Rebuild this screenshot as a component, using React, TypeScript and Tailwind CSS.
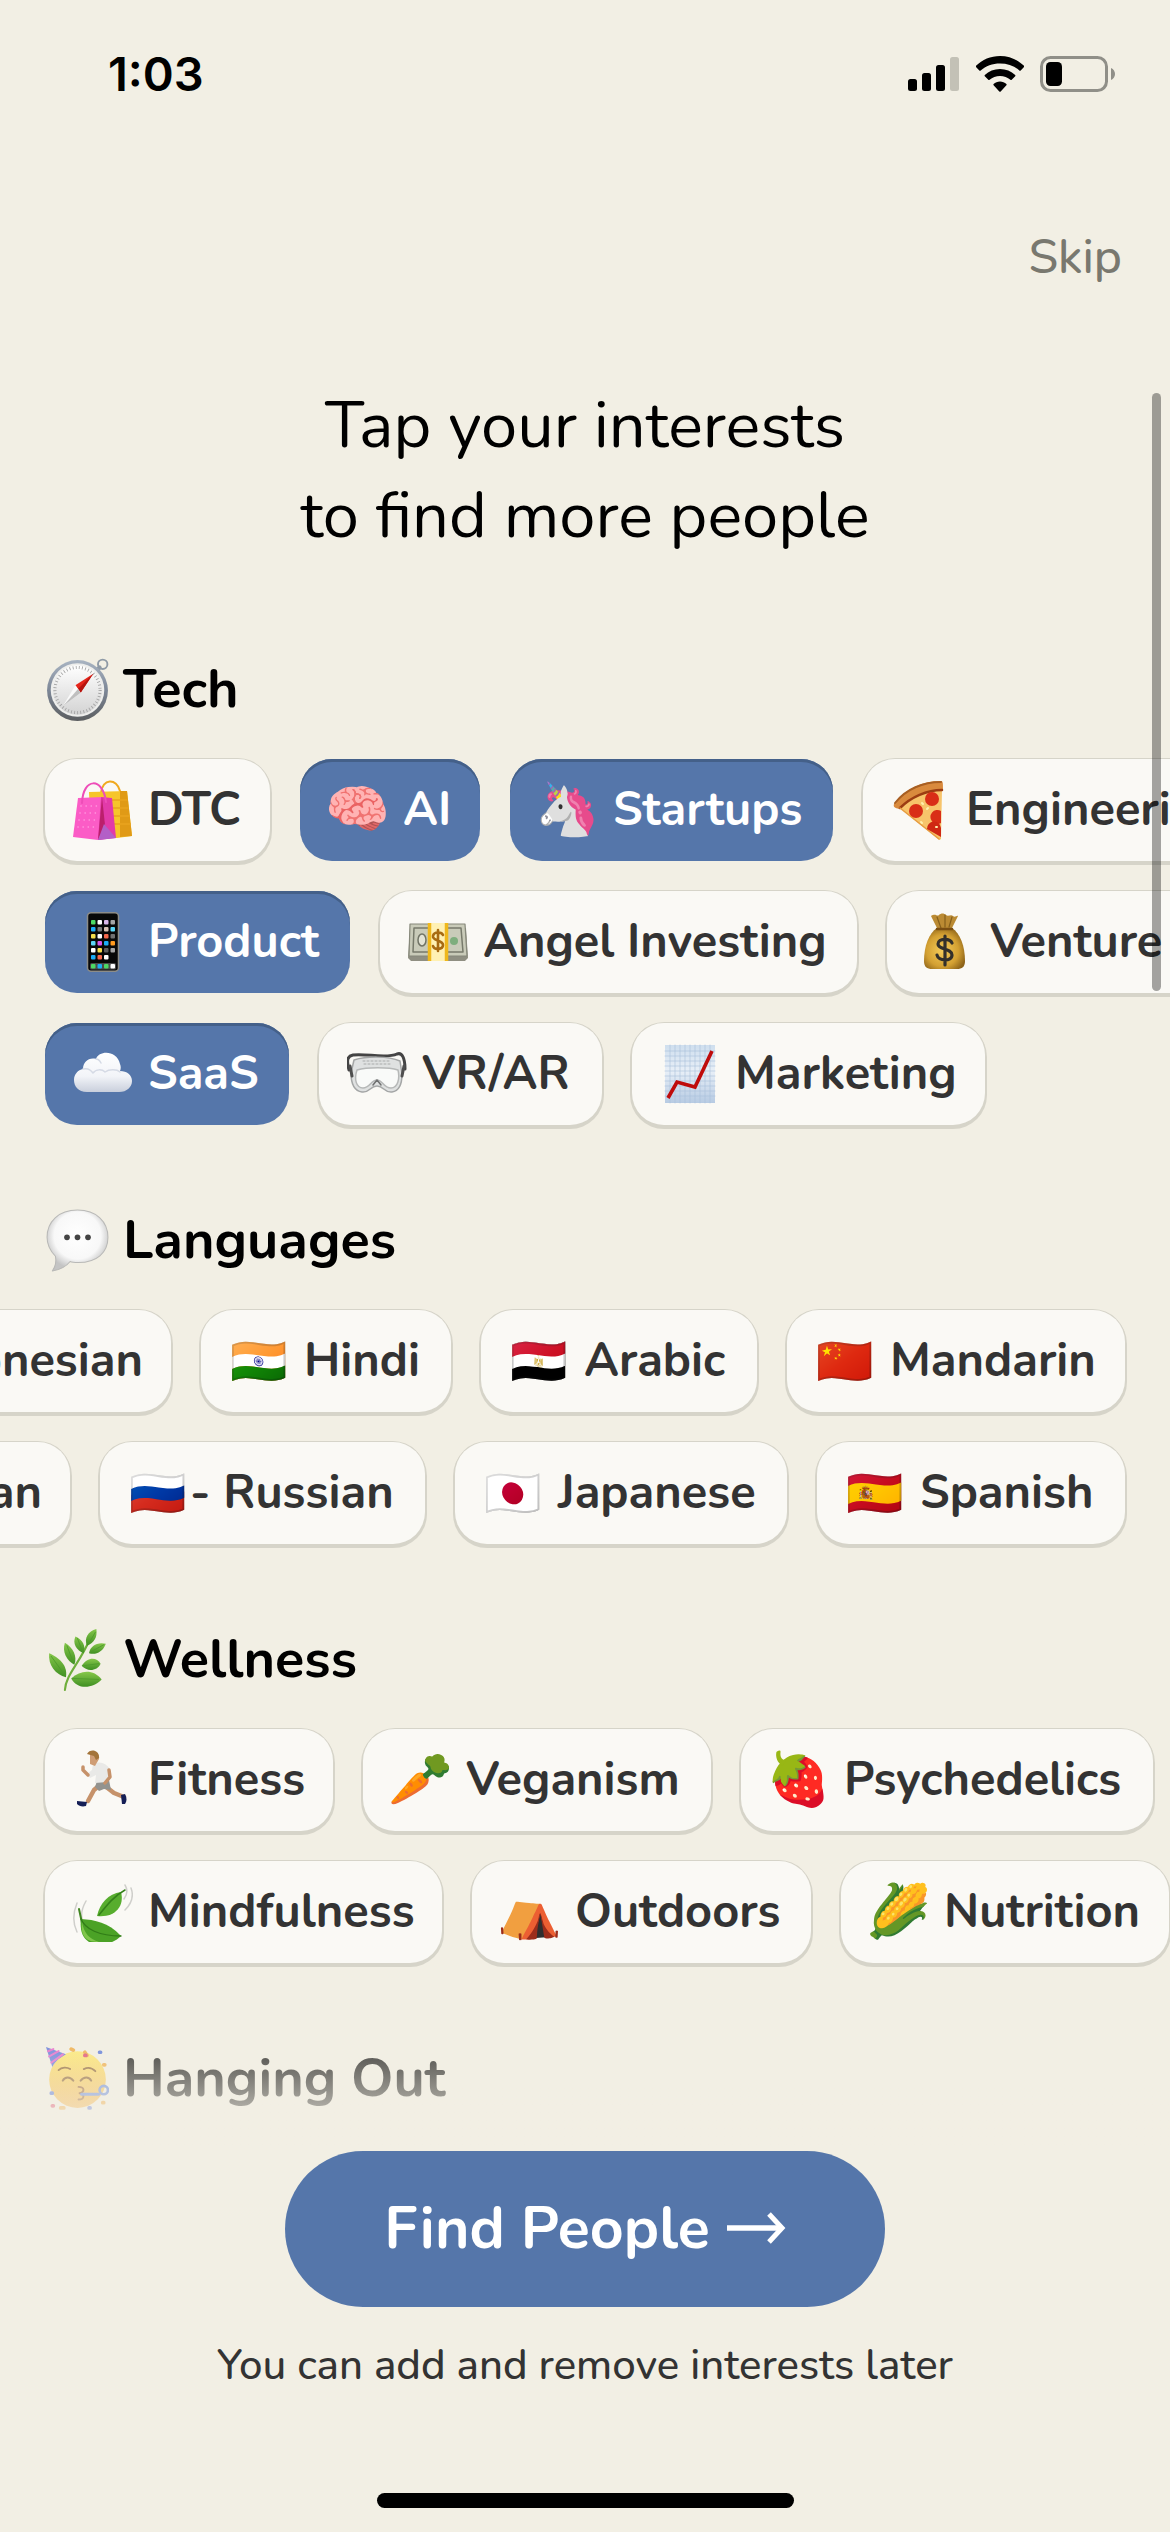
import React, { useState } from "react";
import type { ReactNode } from "react";
import clsx from "clsx";

type Interest = { icon: ReactNode; label: string; width: string; tight?: boolean };
type Category = { icon: ReactNode; name: string; align?: "end"; rows: Interest[][] };

function Art({ children }: { children: ReactNode }) {
  return (
    <svg viewBox="0 0 60 60" className="size-full" fill="none" strokeLinecap="round" strokeLinejoin="round" aria-hidden="true">
      {children}
    </svg>
  );
}

function Glyph({ children }: { children: string }) {
  return <span className="font-['Noto_Color_Emoji'] text-[52px] leading-[60px] font-normal">{children}</span>;
}

function Flag({ children }: { children: string }) {
  return <span className="font-['Noto_Color_Emoji'] text-[46px] leading-[60px] font-normal">{children}</span>;
}

function Compass() {
  return (
    <Art>
      <defs>
        <linearGradient id="compass-rim" x1="0" y1="0" x2="0" y2="1">
          <stop offset="0" stopColor="#a9b4c2" />
          <stop offset=".5" stopColor="#7d8797" />
          <stop offset="1" stopColor="#5c5e60" />
        </linearGradient>
        <linearGradient id="compass-face" x1="0" y1="0" x2="0" y2="1">
          <stop offset="0" stopColor="#ffffff" />
          <stop offset="1" stopColor="#d3d3d3" />
        </linearGradient>
      </defs>
      <circle cx="54" cy="6" r="4.500" stroke="#8f9aa6" strokeWidth="1.800" />
      <path d="M48 12l3-3" stroke="#8f9aa6" strokeWidth="4" />
      <circle cx="30" cy="31" r="29" fill="url(#compass-rim)" />
      <circle cx="30" cy="30.500" r="25.500" fill="#eeeeec" />
      <circle cx="30" cy="30.500" r="23.500" fill="url(#compass-face)" />
      <circle cx="30" cy="30.500" r="21.500" stroke="#a3a3a3" strokeWidth="3" strokeDasharray=".8 2.200" strokeLinecap="butt" />
      <path d="M28 26L45 15 33 33Z" fill="#e5251b" />
      <path d="M33 33L45 15 30.500 29.500Z" fill="#b5140f" />
      <path d="M28 26L16 46 33 33Z" fill="#fafafa" />
      <path d="M33 33L16 46 30.500 29.500Z" fill="#bfbfbf" />
    </Art>
  );
}

function Bags() {
  return (
    <Art>
      <path d="M28 13C29-2 44-2 47 11" stroke="#f0a91e" strokeWidth="2" />
      <path d="M16 12L54 11 59 56 44 58 18 56Z" fill="#f6c52a" />
      <path d="M47 11L54 11 59 56 47 57Z" fill="#e09a16" />
      <path d="M18 20H54M18 28H55M18 36H56M18 44H57" stroke="#e9a41f" strokeWidth="1.500" />
      <path d="M5 18L30 17 37 58 25 60 0 57Z" fill="#fb5cc6" />
      <path d="M28 17L39 18 43 58 25 60Z" fill="#e23aa9" />
      <path d="M29 17L32 45 25 60Z" fill="#bb1f6c" />
      <path d="M31 44L43 58 25 60Z" fill="#b35fc7" />
      <path d="M8 26h17M7 33h18M6 40h18M5 47h18" stroke="#ff9be0" strokeWidth="1.600" strokeDasharray=".1 5" />
      <path d="M9 23C10-3 30-3 33 22" stroke="#ee4db8" strokeWidth="2" />
    </Art>
  );
}

function Pizza() {
  return (
    <Art>
      <path d="M3 24C14 9 31 1 50 1c2 0 2 2 2 9C36 10 20 17 8 29 4 28 2 27 3 24Z" fill="#d98a3d" />
      <path d="M4 23C15 9 32 2 50 2" stroke="#a85f22" strokeWidth="2" />
      <path d="M9 28C20 17 36 10 51 10L50 59c-1 1-2 1-3 0Z" fill="#f7c46b" />
      <path d="M9 28C20 17 36 10 51 10" stroke="#9c3d12" strokeWidth="2.500" />
      <path d="M9 28L48 59" stroke="#e79c3f" strokeWidth="1.500" />
      <circle cx="41" cy="19" r="7" fill="#d92e17" />
      <circle cx="25" cy="31" r="7" fill="#d92e17" />
      <path d="M50 31v12a7 7 0 1 1 0-12Z" fill="#d92e17" />
      <path d="M36 49a6 6 0 0 1 14-1v9Z" fill="#cf2813" />
      <path d="M31 23l1 1M36 29l1-1M30 42l1 1M45 47l1 0" stroke="#fff0b0" strokeWidth="2" />
    </Art>
  );
}

function Phone() {
  const colors = [
    "#4cd964", "#ffffff", "#d9b7e8", "#a5a5a5",
    "#1badf8", "#777777", "#d9c2b5", "#5ad5f5",
    "#f5dd4b", "#ffffff", "#f5674b", "#707070",
    "#5ad5f5", "#d957ec", "#1badf8", "#ff9a1f",
    "#ffffff", "#f5dd4b", "#5b5b5b", "#a5a5a5",
    "#1badf8", "#f5674b", "#ffffff",
  ];
  const dock = ["#4cd964", "#1badf8", "#4cd964", "#ffffff"];
  return (
    <Art>
      <rect x="14.500" y=".8" width="31" height="58.500" rx="3.500" fill="#080808" stroke="#8c8c88" strokeWidth="1.500" />
      <rect x="17" y="51" width="26" height="6.500" rx="1.500" fill="#4a4a4a" />
      {colors.map((color, i) => (
        <rect key={i} x={18 + (i % 4) * 6.5} y={8 + Math.floor(i / 4) * 7} width="4.500" height="4.500" rx="1" fill={color} />
      ))}
      {dock.map((color, i) => (
        <rect key={i} x={18 + i * 6.5} y="52" width="4.500" height="4.500" rx="1" fill={color} />
      ))}
    </Art>
  );
}

function Bills() {
  return (
    <Art>
      <path d="M2 16L58 16 60 46 57 49H3L0 46Z" fill="#8f8f82" />
      <path d="M2 12H57L59 44H1Z" fill="#c9cbb9" stroke="#86887a" strokeWidth="1.200" />
      <path d="M6 16H53L55 40H5Z" stroke="#777a6b" strokeWidth="1.500" />
      <ellipse cx="14" cy="28" rx="4" ry="6" fill="#e3e4d6" stroke="#707365" strokeWidth="1.500" />
      <circle cx="46" cy="29" r="4" fill="#7eae7d" />
      <rect x="20" y="11" width="20" height="38" fill="#fff1b3" />
      <path d="M21.500 11v38M38.500 11v38" stroke="#efb81c" strokeWidth="3.500" strokeLinecap="butt" />
      <path d="M35 23c-1-3-9-4-10 1s10 4 10 9-9 5-10 1M30 18v21" stroke="#a86b12" strokeWidth="2.600" />
    </Art>
  );
}

function MoneyBag() {
  return (
    <Art>
      <defs>
        <radialGradient id="bag" cx=".45" cy=".55" r=".6">
          <stop offset="0" stopColor="#f5cc5a" />
          <stop offset=".65" stopColor="#d3a032" />
          <stop offset="1" stopColor="#8e6419" />
        </radialGradient>
      </defs>
      <path d="M22 16L16 4c5-3 6 1 8-1s5-2 7 0 5-1 7 1 4-1 5 0L37 16Z" fill="#bb8b33" />
      <path d="M22 5l4 11M30 3v12M37 5l-3 10" stroke="#86601b" strokeWidth="1.200" />
      <path d="M22 16H37C45 21 50 34 50 49c0 6-3 8-8 8H17c-5 0-8-2-8-8 0-15 5-28 13-33Z" fill="url(#bag)" />
      <path d="M22 17H37" stroke="#7b4f12" strokeWidth="2.500" />
      <path d="M37 31c-2-5-14-5-14 1s14 4 14 11-14 6-15 0M30 24v29" stroke="#33302b" strokeWidth="3.200" />
    </Art>
  );
}

function Cloud() {
  return (
    <Art>
      <defs>
        <linearGradient id="cloud" x1="0" y1="0" x2="0" y2="1">
          <stop offset="0" stopColor="#ffffff" />
          <stop offset=".6" stopColor="#f2f4f8" />
          <stop offset="1" stopColor="#c9cfdc" />
        </linearGradient>
      </defs>
      <path d="M14 48C5 48 1 42 1 36c0-6 4-10 9-11 0-7 6-12 13-10C26 6 44 6 47 20c1 2 1 5 0 7 7 0 12 4 12 10s-5 11-13 11Z" fill="url(#cloud)" />
      <path d="M10 25c4-1 8 1 10 4 3-4 9-4 12-1 4-3 12-3 15 0M23 15c2 0 4 2 5 4" stroke="#d5dae5" strokeWidth="1.500" />
    </Art>
  );
}

function Goggles() {
  return (
    <Art>
      <path d="M2 26C-1 15 1 12 6 11c12-2 33 4 44-1 5-2 8 4 8 15" stroke="#444444" strokeWidth="3" />
      <path d="M7 16C20 12 41 12 53 17l2 13c0 10-3 17-10 18-8 1-8-6-15-6s-7 7-15 6C8 47 4 40 4 29Z" fill="#dfe1e1" stroke="#a4a6a6" strokeWidth="1.500" />
      <path d="M10 26C20 23 42 23 51 26c2 8 0 18-7 18-8 0-8-8-14-8s-7 8-14 8C9 44 7 35 10 26Z" fill="#f9faf9" stroke="#b6b8b8" strokeWidth="1.500" />
      <path d="M16 17H44M17 20H43" stroke="#a9abab" strokeWidth="1" strokeDasharray="2 2" />
      <path d="M3 22l2 10M57 22l-2 10" stroke="#4f4f4f" strokeWidth="3" />
      <path d="M26 41l4-5 4 5" stroke="#6f7070" strokeWidth="1.500" />
    </Art>
  );
}

function Chart() {
  return (
    <Art>
      <defs>
        <linearGradient id="chart" x1="0" y1="0" x2="0" y2="1">
          <stop offset="0" stopColor="#cfdfee" />
          <stop offset=".45" stopColor="#e8eff7" />
          <stop offset="1" stopColor="#b7cbe3" />
        </linearGradient>
      </defs>
      <rect x="5" y="1" width="50" height="58" fill="url(#chart)" />
      <path d="M10 1v58M15 1v58M20 1v58M25 1v58M30 1v58M35 1v58M40 1v58M45 1v58M50 1v58M5 7h50M5 12h50M5 17h50M5 22h50M5 27h50M5 32h50M5 37h50M5 42h50M5 47h50M5 52h50" stroke="#a9c0da" strokeWidth=".6" />
      <path d="M8 54L17 38 35 43 52 7" stroke="#bf0b0b" strokeWidth="3.600" strokeLinecap="butt" strokeLinejoin="miter" />
    </Art>
  );
}

function Speech() {
  return (
    <Art>
      <defs>
        <radialGradient id="speech" cx=".5" cy=".42" r=".55">
          <stop offset="0" stopColor="#ffffff" />
          <stop offset=".7" stopColor="#f8f8f8" />
          <stop offset="1" stopColor="#c4c4c4" />
        </radialGradient>
      </defs>
      <path d="M30 1C48 1 59 12 59 27S48 51 31 51c-3 0-6 0-8-1-4 5-10 8-17 9 3-4 4-9 3-14C4 40 1 34 1 27 1 12 12 1 30 1Z" fill="url(#speech)" stroke="#b9b9b7" strokeWidth="1" />
      <circle cx="20" cy="27" r="2.700" fill="#444444" />
      <circle cx="30" cy="27" r="2.700" fill="#444444" />
      <circle cx="40" cy="27" r="2.700" fill="#444444" />
    </Art>
  );
}

function Herb() {
  return (
    <Art>
      <defs>
        <linearGradient id="herb" x1="0" y1="0" x2="0" y2="1">
          <stop offset="0" stopColor="#86c74a" />
          <stop offset="1" stopColor="#3f8f22" />
        </linearGradient>
      </defs>
      <path d="M18 59C19 44 32 34 42 10" stroke="#6fae3b" strokeWidth="2" />
      <path d="M3 24c9 4 18 11 16 23C9 44 2 36 3 24Z" fill="url(#herb)" />
      <path d="M18 14c8 5 12 13 9 21-7-4-12-12-9-21Z" fill="url(#herb)" />
      <path d="M28 8c7 3 10 9 8 16-7-3-11-9-8-16Z" fill="url(#herb)" />
      <path d="M48 1c-8 2-12 9-9 16 7-3 10-8 9-16Z" fill="url(#herb)" />
      <path d="M57 15c-8-2-15 2-16 9 6 2 13-1 16-9Z" fill="url(#herb)" />
      <path d="M52 34c-4-7-13-6-18 2 5 6 15 5 18-2Z" fill="url(#herb)" />
      <path d="M53 49c-8-10-20-9-29-1 6 11 20 10 29 1Z" fill="url(#herb)" />
      <path d="M5 27l13 18M20 17l6 16M30 10l5 13M47 4l-7 12M55 16l-13 7M50 34l-15 2M50 49l-25-1" stroke="#4d9a2b" strokeWidth=".8" />
    </Art>
  );
}

function Runner() {
  return (
    <Art>
      <path d="M28 34L21 40 15 51" stroke="#c6926a" strokeWidth="4.500" />
      <path d="M32 36L41 43 51 47" stroke="#c6926a" strokeWidth="4.500" />
      <path d="M4 51l10 1-1 4C9 57 6 56 4 54Z" fill="#151f56" />
      <path d="M48 45l4-1c2 4 2 7 0 10h-3Z" fill="#151f56" />
      <path d="M24 31l12-1 2 10-7-1-5 2-4-4Z" fill="#93938f" />
      <path d="M20 14c7-3 13-1 17 5l-3 13-12 1 1-8-6 3-3-4 5-4Z" fill="#e9e9e7" />
      <path d="M15 25l-5-5v-3" stroke="#c6926a" strokeWidth="3.500" />
      <path d="M36 20l1 7-5 6" stroke="#c6926a" strokeWidth="3.500" />
      <path d="M17 4c4-4 10-1 9 5l-4 7-5-2Z" fill="#cf9d75" />
      <path d="M14 4c3-6 13-4 12 4l-3 2-2-4Z" fill="#a3743a" />
    </Art>
  );
}

function Leaves() {
  return (
    <Art>
      <path d="M4 50C-1 40 0 31 4 21M10 40C7 33 9 26 13 19M52 3c3 5 2 10-1 14M58 6c3 8 0 16-6 22" stroke="#cfcfcb" strokeWidth="1.500" />
      <path d="M6 27l3 14" stroke="#3f8420" strokeWidth="2" />
      <path d="M8 37c14 1 27 3 40 17-8 8-21 11-32 6C8 55 7 46 8 37Z" fill="#4ba226" />
      <path d="M8 37c4 10 18 17 40 17" stroke="#317c17" strokeWidth="1.300" />
      <path d="M9 40c2 12 8 17 17 20-11 0-19-4-17-20Z" fill="#7fc64b" />
      <path d="M24 34C27 21 35 12 48 10c4 15-7 26-24 24Z" fill="#57ad2e" />
      <path d="M52 8C41 14 34 23 26 33" stroke="#34811a" strokeWidth="1.500" />
    </Art>
  );
}

function PartyFace() {
  return (
    <Art>
      <defs>
        <linearGradient id="party" x1="0" y1="0" x2="0" y2="1">
          <stop offset="0" stopColor="#ffe95c" />
          <stop offset="1" stopColor="#f4a52d" />
        </linearGradient>
      </defs>
      <circle cx="30" cy="31" r="27" fill="url(#party)" />
      <path d="M0 0L19 7C14 10 9 13 6 19Z" fill="#4b66d8" />
      <path d="M2 4l5-2M3 9l9-5M5 15l11-8" stroke="#e44fc6" strokeWidth="2" />
      <path d="M12 22c3-3 8-3 11-1M36 21c4-2 8-1 11 2" stroke="#7c4b12" strokeWidth="1.800" />
      <path d="M16 32c2-4 7-4 10 0M33 32c3-4 8-4 10 0" stroke="#7c4b12" strokeWidth="2" />
      <path d="M31 38c6 0 6 5 1 6 5 1 5 6-1 6" stroke="#8c4b12" strokeWidth="1.800" />
      <path d="M34 45H50" stroke="#557ad8" strokeWidth="3" />
      <circle cx="55" cy="41" r="4" stroke="#557ad8" strokeWidth="2.500" />
      <path d="M37 5l2 3M24 2l2 1M55 17h1M14 58h3M54 53h1" stroke="#ef9f28" strokeWidth="3.500" />
      <path d="M51 5h1M5 44h1M41 58h1" stroke="#4164d8" strokeWidth="3.500" />
      <path d="M37 8h1M6 56h1" stroke="#dc2f5a" strokeWidth="3.500" />
    </Art>
  );
}

const categories: Category[] = [
  {
    icon: <Compass />,
    name: "Tech",
    rows: [
      [
        { icon: <Bags />, label: "DTC", width: "w-[225px]" },
        { icon: <Glyph>🧠</Glyph>, label: "AI", width: "w-[180px]" },
        { icon: <Glyph>🦄</Glyph>, label: "Startups", width: "w-[323px]" },
        { icon: <Pizza />, label: "Engineering", width: "w-auto" },
      ],
      [
        { icon: <Phone />, label: "Product", width: "w-[305px]" },
        { icon: <Bills />, label: "Angel Investing", width: "w-[477px]" },
        { icon: <MoneyBag />, label: "Venture Capital", width: "w-auto" },
      ],
      [
        { icon: <Cloud />, label: "SaaS", width: "w-[244px]" },
        { icon: <Goggles />, label: "VR/AR", width: "w-[283px]" },
        { icon: <Chart />, label: "Marketing", width: "w-[353px]" },
      ],
    ],
  },
  {
    icon: <Speech />,
    name: "Languages",
    align: "end",
    rows: [
      [
        { icon: <Flag>🇮🇩</Flag>, label: "Indonesian", width: "w-auto" },
        { icon: <Flag>🇮🇳</Flag>, label: "Hindi", width: "w-[250px]" },
        { icon: <Flag>🇪🇬</Flag>, label: "Arabic", width: "w-[276px]" },
        { icon: <Flag>🇨🇳</Flag>, label: "Mandarin", width: "w-[338px]" },
      ],
      [
        { icon: <Flag>🇩🇪</Flag>, label: "German", width: "w-auto" },
        { icon: <Flag>🇷🇺</Flag>, label: "- Russian", width: "w-[325px]", tight: true },
        { icon: <Flag>🇯🇵</Flag>, label: "Japanese", width: "w-[332px]" },
        { icon: <Flag>🇪🇸</Flag>, label: "Spanish", width: "w-[308px]" },
      ],
    ],
  },
  {
    icon: <Herb />,
    name: "Wellness",
    rows: [
      [
        { icon: <Runner />, label: "Fitness", width: "w-[288px]" },
        { icon: <Glyph>🥕</Glyph>, label: "Veganism", width: "w-[348px]" },
        { icon: <Glyph>🍓</Glyph>, label: "Psychedelics", width: "w-[412px]" },
      ],
      [
        { icon: <Leaves />, label: "Mindfulness", width: "w-[397px]" },
        { icon: <Glyph>⛺</Glyph>, label: "Outdoors", width: "w-[339px]" },
        { icon: <Glyph>🌽</Glyph>, label: "Nutrition", width: "w-[328px]" },
      ],
    ],
  },
  { icon: <PartyFace />, name: "Hanging Out", rows: [] },
];

function StatusBar() {
  return (
    <div className="flex h-[148px] items-center justify-between pl-[108px] pr-[54px]">
      <span className="font-['Inter'] text-[47px] font-semibold text-black">1:03</span>
      <div className="flex items-center gap-[16px]">
        <svg width="52" height="36" viewBox="0 0 52 36" aria-hidden="true">
          <rect x="0" y="23" width="9" height="12" rx="2.500" />
          <rect x="14" y="17" width="9" height="18" rx="2.500" />
          <rect x="28" y="9" width="9" height="26" rx="2.500" />
          <rect x="42" y="1" width="9" height="34" rx="2.500" fill="#c3c1b6" />
        </svg>
        <svg width="48" height="36" viewBox="0 0 48 36" aria-hidden="true">
          <path d="M24 0C33.3 0 41.800 3.700 48 9.800c.4.400.4.900 0 1.300l-3.300 3.400c-.4.400-1 .4-1.400 0C38.300 9.700 31.500 7.400 24 7.400S9.700 9.700 4.700 14.500c-.4.400-1 .4-1.400 0L0 11.100c-.4-.4-.4-.9 0-1.300C6.200 3.700 14.700 0 24 0Z" />
          <path d="M24 13c5.900 0 11.200 2.300 15.200 6 .4.400.4.900 0 1.300l-3.500 3.500c-.4.400-.9.400-1.300 0C31.600 21.400 28 20 24 20s-7.600 1.400-10.400 3.800c-.4.400-.9.400-1.300 0l-3.500-3.500c-.4-.4-.4-.9 0-1.300 4-3.700 9.300-6 15.200-6Z" />
          <path d="M24 25.500c2.500 0 4.700.9 6.400 2.400.4.400.4.900 0 1.300l-5.700 6.300c-.4.400-1 .4-1.400 0l-5.700-6.300c-.4-.4-.4-.9 0-1.300 1.700-1.500 3.900-2.400 6.400-2.400Z" />
        </svg>
        <svg width="76" height="36" viewBox="0 0 76 36" aria-hidden="true">
          <rect x="1.500" y="1.500" width="65" height="33" rx="9" fill="none" stroke="#908f88" strokeWidth="3" />
          <rect x="6" y="6" width="16" height="24" rx="4.500" />
          <path d="M71 12c2.600 1 4 3.500 4 6s-1.400 5-4 6Z" fill="#908f88" />
        </svg>
      </div>
    </div>
  );
}

function Chip({ interest, selected, onToggle }: { interest: Interest; selected: boolean; onToggle: () => void }) {
  return (
    <button
      type="button"
      aria-pressed={selected}
      onClick={onToggle}
      className={clsx(
        "flex h-[102px] shrink-0 items-center rounded-[32px] pr-[28px] pl-[28px] text-[47px] leading-[66px] font-bold whitespace-nowrap",
        interest.width,
        interest.tight ? "gap-[2px]" : "gap-[15px]",
        selected
          ? "bg-[#5576aa] text-white shadow-[inset_0_3px_0_#446089]"
          : "bg-[#faf9f5] text-[#333333] shadow-[0_0_0_1px_#d6d4c9,0_2px_0_2px_#d6d4c9]",
      )}
    >
      <span className="flex size-[60px] shrink-0 items-center justify-center">{interest.icon}</span>
      <span>{interest.label}</span>
    </button>
  );
}

export default function App() {
  const [selected, setSelected] = useState(["AI", "Startups", "Product", "SaaS"]);
  const toggle = (label: string) =>
    setSelected((now) => (now.includes(label) ? now.filter((item) => item !== label) : [...now, label]));

  return (
    <div className="flex h-screen flex-col overflow-hidden bg-[#f2efe4] font-['Nunito','Lato',sans-serif]">
      <StatusBar />
      <div className="flex justify-end px-[48px] pt-[76px] pb-[91px]">
        <button type="button" className="text-[48px] leading-[66px] font-medium text-[#79786f]">
          Skip
        </button>
      </div>

      <main className="relative min-h-0 flex-1 overflow-hidden">
        <h1 className="text-center text-[65px] leading-[90px] text-black">
          Tap your interests
          <br />
          to find more people
        </h1>
        <div className="mt-[91px] flex flex-col gap-[78px]">
          {categories.map((category) => (
            <section key={category.name} className="flex flex-col gap-[33px]">
              <h2 className="flex items-center gap-[14px] px-[46px] text-[54px] leading-[74px] font-bold text-black">
                <span className="size-[63px] shrink-0">{category.icon}</span>
                {category.name}
              </h2>
              {category.rows.length > 0 && (
                <div className="flex flex-col gap-[30px]">
                  {category.rows.map((row) => (
                    <div
                      key={row[0].label}
                      className={clsx("flex gap-[30px] px-[45px]", category.align === "end" && "justify-end")}
                    >
                      {row.map((interest) => (
                        <Chip
                          key={interest.label}
                          interest={interest}
                          selected={selected.includes(interest.label)}
                          onToggle={() => toggle(interest.label)}
                        />
                      ))}
                    </div>
                  ))}
                </div>
              )}
            </section>
          ))}
        </div>
        <div className="pointer-events-none absolute inset-x-0 bottom-0 h-[154px] bg-linear-to-b from-[#f2efe4]/0 to-[#f2efe4]" />
        <div className="absolute top-[12px] right-[9px] h-[598px] w-[9px] rounded-full bg-black/35" />
      </main>

      <footer className="flex flex-col items-center pb-[24px]">
        <button
          type="button"
          className="flex h-[156px] w-[600px] items-center justify-center gap-[16px] rounded-full bg-[#5576aa] text-[59px] font-bold text-white"
        >
          Find People
          <svg width="60" height="36" viewBox="0 0 60 36" fill="none" stroke="currentColor" aria-hidden="true">
            <path d="M1 17h54" strokeWidth="5.500" />
            <path d="M43 3l13 14-13 14" strokeWidth="5" />
          </svg>
        </button>
        <p className="mt-[30px] text-[42px] leading-[57px] font-medium text-[#333333]">
          You can add and remove interests later
        </p>
        <div className="mt-[99px] h-[15px] w-[417px] rounded-full bg-black" />
      </footer>
    </div>
  );
}
